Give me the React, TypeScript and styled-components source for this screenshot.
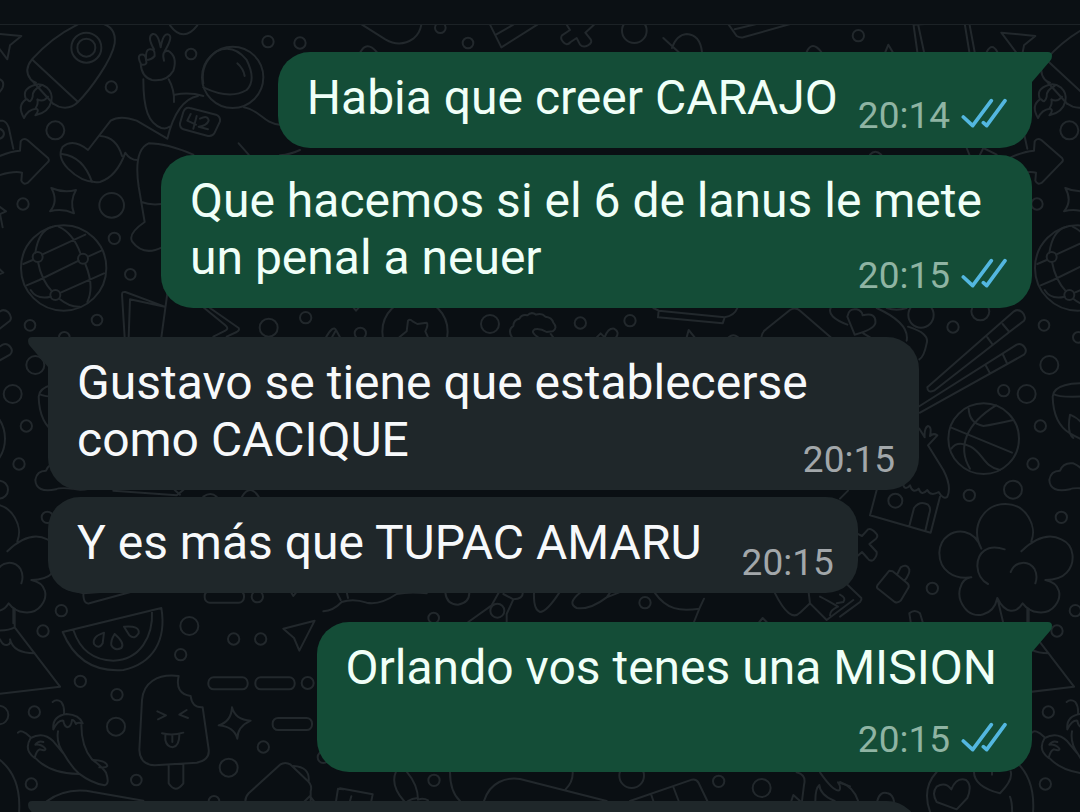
import React from "react";
import styled, { createGlobalStyle } from "styled-components";

const GlobalStyle = createGlobalStyle`
  *, *::before, *::after { box-sizing: border-box; }
  body { margin: 0; background: #0a0f13; font-family: Roboto, sans-serif; }
`;

const Screen = styled.div`
  position: relative;
  display: flex;
  flex-direction: column;
  height: 100vh;
  overflow: hidden;
  background: #0a0f13;
`;

const Header = styled.header`
  position: relative;
  flex: none;
  height: 25px;
  background: #0b1014;
  border-bottom: 1px solid #1c2226;
`;

const Wallpaper = styled.svg`
  position: absolute;
  top: 0;
  left: 0;
  fill: none;
  stroke: #22282c;
  stroke-width: 6;
  stroke-linecap: round;
  stroke-linejoin: round;
`;

const Chat = styled.main`
  position: relative;
  flex: 1;
  min-height: 0;
  overflow: hidden;
  padding: 27px 48px 0;
`;

const Thread = styled.ol`
  display: flex;
  flex-direction: column;
  gap: 29px;
  margin: 0;
  padding: 0;
  list-style: none;
`;

const Turn = styled.li<{ $mine: boolean }>`
  display: flex;
  flex-direction: column;
  align-items: ${(p) => (p.$mine ? "flex-end" : "flex-start")};
  gap: 7px;
`;

const Bubble = styled.article<{ $mine: boolean; $tail: boolean }>`
  position: relative;
  display: flow-root;
  max-width: calc(100% - 113px);
  min-height: 96px;
  padding: 17px 28px ${(p) => (p.$mine ? 10 : 8)}px 29px;
  border-radius: 32px;
  border-top-left-radius: ${(p) => (p.$tail && !p.$mine ? 0 : 32)}px;
  border-top-right-radius: ${(p) => (p.$tail && p.$mine ? 0 : 32)}px;
  background: ${(p) => (p.$mine ? "#144d37" : "#1f272a")};
  color: ${(p) => (p.$mine ? "#f0fff8" : "#f7f9fb")};
  font-size: 48px;
  line-height: 57px;
`;

const Tail = styled.svg<{ $mine: boolean }>`
  position: absolute;
  top: 0;
  ${(p) => (p.$mine ? "left: 100%;" : "right: 100%; transform: scaleX(-1);")}
  fill: ${(p) => (p.$mine ? "#144d37" : "#1f272a")};
`;

const Meta = styled.span<{ $mine: boolean; $below: boolean }>`
  float: right;
  display: flex;
  gap: 11px;
  margin-top: ${(p) => (p.$below ? 22 : p.$mine ? 25 : 27)}px;
  margin-right: ${(p) => (p.$mine ? -3 : -4)}px;
  margin-left: ${(p) => (p.$mine ? 20 : 40)}px;
  color: ${(p) => (p.$mine ? "#8fb4a3" : "#a2a7aa")};
  font-size: 37px;
  line-height: 44px;
`;

const Body = styled.span<{ $block: boolean }>`
  display: ${(p) => (p.$block ? "block" : "inline")};
  padding-right: ${(p) => (p.$block ? 7 : 0)}px;
`;

const Ticks = styled.svg`
  margin-top: 4px;
  fill: none;
  stroke: #53b7e0;
  stroke-width: 11;
  stroke-linecap: round;
  stroke-linejoin: round;
`;

type Message = { text: string; time: string; below?: boolean };
type Group = { mine: boolean; messages: Message[] };

const groups: Group[] = [
  {
    mine: true,
    messages: [
      { text: "Habia que creer CARAJO", time: "20:14" },
      { text: "Que hacemos si el 6 de lanus le mete un penal a neuer", time: "20:15" },
    ],
  },
  {
    mine: false,
    messages: [
      { text: "Gustavo se tiene que establecerse como CACIQUE", time: "20:15" },
      { text: "Y es más que TUPAC AMARU", time: "20:15" },
    ],
  },
  { mine: true, messages: [{ text: "Orlando vos tenes una MISION", time: "20:15", below: true }] },
];

const Incoming = styled(Bubble)`
  width: 100%;
`;

function BubbleTail({ mine }: { mine: boolean }) {
  return (
    <Tail $mine={mine} width="20" height="32" viewBox="0 0 20 32" aria-hidden="true">
      <path d="M-1 0H16Q20 0 20 4Q20 7 18 9L0 30L-1 32Z" />
    </Tail>
  );
}

function MessageBubble({ message, mine, tail }: { message: Message; mine: boolean; tail: boolean }) {
  const below = Boolean(message.below);
  return (
    <Bubble $mine={mine} $tail={tail}>
      {tail && <BubbleTail mine={mine} />}
      <Body $block={below}>{message.text}</Body>
      <Meta $mine={mine} $below={below}>
        <time>{message.time}</time>
        {mine && (
          <Ticks width="46" height="30" viewBox="0 0 138 90" role="img" aria-label="Read">
            <path d="M7 57L35 83L91 8M67 74L77 83L132 8" />
          </Ticks>
        )}
      </Meta>
    </Bubble>
  );
}

/* Every doodle is drawn on a grid three times finer than the page. */
function Doodles() {
  return (
    <Wallpaper width="2000" height="1000" aria-hidden="true">
      <defs>
        <g id="west">
          <g transform="scale(.33333)">
            {/* paper plane and scraps at the seam */}
            <path d="M-38 98L64 108L30 136L22 178ZM0 238Q14 244 8 262Q4 272 -6 280" />
            {/* rocket */}
            <path d="M228 76C180 100 130 140 96 178Q70 210 92 238Q96 244 108 248M228 76Q250 60 300 68Q350 80 344 130C336 180 270 270 234 306Q210 330 176 320L158 310M98 180L234 306M100 246L160 312" />
            <circle cx="259" cy="143" r="45" />
            <circle cx="259" cy="143" r="27" />
            <path d="M72 354Q50 316 78 298Q64 266 106 254Q124 250 140 262Q160 280 154 304Q146 338 106 346Q120 330 108 326Q84 328 72 354M82 298Q92 312 98 290Q96 270 122 258M106 326Q116 310 112 298Q130 308 144 290" />
            <circle cx="334" cy="261" r="17" />
            <circle cx="166" cy="391" r="27" />
            <circle cx="69" cy="612" r="17" />
            {/* camera edge and arrow */}
            <path d="M-20 362H8Q20 366 26 382L40 446M-10 384Q12 388 12 402Q10 416 -10 418M-10 472Q30 454 60 452L62 424Q70 412 82 420L144 474Q150 482 142 488L84 548Q70 556 64 542L66 518Q40 512 -10 528M-30 600L18 634L0 642L8 682M-20 790L10 818L-10 826" />
            <path d="M154 564Q190 580 228 570Q208 604 222 640Q186 624 150 634Q176 604 154 564Z" />
            {/* globe */}
            <circle cx="191" cy="804" r="128" />
            <path d="M70 792L98 780M126 764L256 704M264 770L304 752M236 782L118 840L80 856M182 878L312 820M106 758Q116 690 158 680M114 786Q124 840 156 874M176 680Q220 700 242 762M256 792Q284 860 262 906M178 896Q210 922 240 920M92 870Q110 900 152 890" />
            <circle cx="113" cy="771" r="15" />
            <circle cx="249" cy="776" r="15" />
            <circle cx="166" cy="885" r="15" />
            <circle cx="90" cy="976" r="16" />
            <circle cx="193" cy="1012" r="16" />
          </g>
          <g transform="translate(0 590) scale(.33333)">
            {/* pizza slice */}
            <path d="M44 56V112L180 290L-20 314M-10 122Q26 122 44 112M0 148Q10 170 24 164Q34 160 30 148Q40 190 104 190" />
            <circle cx="184" cy="62" r="17" />
            <circle cx="129" cy="123" r="17" />
            <circle cx="103" cy="366" r="17" />
            <circle cx="-3" cy="375" r="28" />
            <circle cx="94" cy="582" r="17" />
            {/* chillies */}
            <path d="M158 336Q170 326 184 336Q194 350 192 372M160 418Q156 378 200 372Q238 374 248 400Q232 396 228 402Q222 388 216 390Q214 410 202 412Q192 408 190 392Q174 390 160 418M174 424Q168 460 192 492Q214 530 236 550Q276 580 314 586Q330 582 318 548Q306 530 276 508Q244 470 244 404M54 428Q64 416 90 440M104 504Q70 480 92 444Q130 424 160 454L190 490M104 504Q110 480 120 478Q138 484 136 476Q124 462 106 464Q116 450 130 456M108 506Q150 550 236 552M280 510Q320 512 322 528Q318 534 298 532" />
            <path d="M-20 496Q70 550 56 680" />
          </g>
        </g>
        <g id="east">
          <g transform="translate(840 300) scale(.33333)">
            {/* chopsticks */}
            <path d="M262 262L522 34Q534 26 546 36Q560 50 552 62L282 272Q262 280 262 262M442 112L458 134M488 72L508 96M220 330L530 134Q544 128 554 142Q562 154 552 164L240 338M436 194L450 220M488 162L502 192" />
            {/* basketball */}
            <circle cx="431" cy="416" r="106" />
            <path d="M332 382L516 458M468 316C380 370 350 440 390 506M386 326Q388 370 430 378Q460 374 520 360M334 446Q352 420 392 440C430 460 430 500 480 510" />
            <circle cx="628" cy="195" r="27" />
            <circle cx="491" cy="272" r="17" />
            <circle cx="560" cy="282" r="27" />
            <circle cx="601" cy="378" r="17" />
            <circle cx="579" cy="492" r="17" />
            <circle cx="519" cy="569" r="27" />
            <circle cx="388" cy="586" r="17" />
            <circle cx="664" cy="652" r="17" />
            {/* cup */}
            <path d="M780 252Q640 240 638 290Q640 370 690 400Q740 430 780 430M640 282Q660 296 780 286M690 344Q730 360 740 400M690 344Q680 400 700 414" />
            {/* small cloud */}
            <path d="M790 566Q760 572 740 566Q700 562 690 568Q630 580 628 540Q632 512 660 512Q670 486 700 490Q724 500 730 516" />
            {/* popcorn */}
            <path d="M424 746C390 680 430 612 496 612C560 612 592 680 574 724M544 754C600 700 640 706 664 718C706 736 706 790 680 818Q660 840 616 840C664 850 666 890 646 916C620 950 570 940 548 910C530 940 496 944 472 894C460 950 400 960 374 924C344 886 360 836 394 832C340 840 298 810 298 758C300 710 340 690 374 696Q410 704 424 746M494 748C440 730 412 760 412 798Q414 836 444 852M512 816C526 782 566 780 584 808Q594 828 586 850M472 894L490 970M562 924V970" />
          </g>
        </g>
      </defs>
      <use href="#west" />
      <use href="#west" x="1014" />
      <use href="#east" />
      <use href="#east" x="-1014" />

      <g transform="scale(.33333)">
        {/* astronaut */}
        <path d="M510 76Q550 130 592 76M424 194Q410 170 422 164Q436 160 438 178Q436 150 448 148Q466 144 464 168Q454 180 438 180Q444 196 424 194M462 148Q440 110 458 102Q474 98 482 142Q490 96 506 104Q520 110 494 154M492 182Q484 152 504 152Q534 170 520 212Q500 246 456 240Q424 230 422 190M430 238C430 330 446 370 484 384Q500 388 508 380M506 238Q524 270 522 306M524 284Q570 276 610 288M594 288Q530 300 502 416L410 362Q360 344 332 362L264 450Q220 414 188 440Q170 470 204 506Q250 552 300 546Q350 530 376 458Q390 480 412 480M302 408Q350 412 366 468M186 462Q250 470 276 546" />
        <circle cx="698" cy="232" r="92" />
        <path d="M610 250Q600 190 650 154Q700 130 740 180Q770 240 740 270Q690 300 610 262M712 190Q730 206 734 228M732 322C780 330 790 370 840 374M716 430L746 464M580 464Q500 430 446 430Q400 450 416 560L434 666Q384 700 396 724Q430 770 486 742M424 606Q450 616 484 612M840 466Q870 464 900 450" />
        <path d="M570 324Q556 320 550 336L540 370Q538 382 550 388L624 408Q638 410 644 398L660 364Q662 350 648 344Z" />
        <path d="M572 342L562 362L588 374M590 348L580 386M600 356Q624 344 626 362Q620 378 596 380L624 388" />
        <circle cx="573" cy="162" r="16" />
        <circle cx="804" cy="125" r="17" />
        <circle cx="900" cy="129" r="17" />
        <circle cx="335" cy="616" r="37" />
        <circle cx="343" cy="715" r="17" />
        <circle cx="391" cy="823" r="16" />
        <circle cx="291" cy="960" r="16" />
        <circle cx="806" cy="983" r="27" />
        {/* pennant */}
        <path d="M374 1012L366 884Q366 874 376 876L494 920M386 1012L390 898L494 920M502 880L484 1012M630 924L716 984Q720 990 710 996L680 1010M610 922L676 976Q688 986 676 992L640 1010" />
      </g>

      {/* strip under the header */}
      <g transform="translate(240 20) scale(.33333)">
        <path d="M366 14L436 58Q480 84 520 56Q540 40 544 14M750 14L784 82L892 14M768 44L820 14M980 14L990 30L966 46Q960 56 968 64Q980 80 992 66L1010 54L1020 74Q1030 84 1044 76Q1058 68 1052 58L1036 38L1062 14M1270 54L1318 98M1296 84Q1310 44 1340 42Q1380 44 1386 96M1466 14L1490 48Q1500 54 1510 52L1680 4L1740 -10M1484 28L1600 0" />
        <path d="M360 98Q380 60 410 96" />
        <circle cx="601" cy="23" r="16" />
        <circle cx="684" cy="69" r="16" />
        <circle cx="1183" cy="32" r="37" />
      </g>
      <g transform="translate(840 30) scale(.33333)">
        <circle cx="55" cy="17" r="17" />
        <path d="M-100 66Q-84 30 -56 66M136 66L145 44L158 66M220 -20L232 66M234 -18L252 66M220 -16L290 -20M374 -20L388 66M388 -20L404 66M440 66Q456 36 472 66" />
        <path d="M380 354L388 374M420 374L430 354L470 374M90 374Q105 356 124 374" />
      </g>

      {/* strip between the first and second turn */}
      <g transform="translate(160 280) scale(.33333)">
        <circle cx="437" cy="113" r="17" />
        <circle cx="601" cy="160" r="17" />
        <circle cx="765" cy="155" r="98" />
        <circle cx="990" cy="132" r="27" />
        <circle cx="1261" cy="129" r="17" />
        <path d="M580 82L588 92L597 82M498 172Q520 134 528 150L540 172M516 172L526 154M718 172L740 154L744 122Q750 116 758 124L772 132L800 128Q806 134 796 154L804 172" />
        <path d="M1056 172Q1042 150 1060 138Q1060 120 1078 116Q1086 102 1102 106Q1114 94 1128 104Q1146 98 1156 110Q1176 112 1180 128Q1194 144 1178 154L1160 156Q1140 144 1124 148Q1110 156 1134 172M1172 162L1180 172M1310 172L1322 160L1334 172Q1344 144 1362 146Q1380 156 1368 172" />
      </g>
      <g transform="translate(560 280) scale(.33333)">
        <circle cx="210" cy="122" r="17" />
        <circle cx="1083" cy="105" r="38" />
        <circle cx="1261" cy="94" r="27" />
        <circle cx="1179" cy="141" r="17" />
        <path d="M280 84L296 92L294 112L488 130L494 112L296 92M494 112Q524 106 532 84M380 172L386 150L404 172M506 172Q520 160 534 172M604 172Q606 156 618 148L690 90Q706 80 720 92L812 172M812 84Q800 110 862 134M884 164L862 110Q866 84 890 88Q906 92 908 106Q950 96 946 130Q940 150 884 164M910 160L930 172M950 84Q1050 130 1040 182M1044 140Q1110 160 1100 190Q1092 230 1078 238M980 84Q1010 94 1040 84" />
      </g>

      {/* gap between the two incoming bubbles */}
      <g transform="translate(0 300) scale(.33333)">
        <path d="M340 572L530 586L550 570M524 570L540 584M610 590Q632 574 650 590M726 590Q750 550 776 590" />
      </g>

      {/* house, bone, padlock */}
      <g transform="translate(840 300) scale(.33333)">
        <path d="M110 570L90 646L272 698L300 590M208 678L222 624Q240 600 264 614Q274 624 268 640L256 692M190 556Q196 572 210 556Q218 582 236 566Q244 590 262 570Q272 590 296 576Q310 600 322 590Q336 560 310 510L264 436L292 406Q280 398 270 408Q276 380 264 378Q252 384 254 412L238 386M0 596L24 572" />
        <circle cx="166" cy="602" r="21" />
        <path d="M50 700L66 708L84 688Q94 684 108 700Q116 708 108 716L88 732L110 756Q112 768 100 780Q90 786 82 774L66 756L50 770M148 812L112 856Q108 864 116 868L164 906Q174 910 182 902L206 862Q208 854 200 848L158 814ZM172 822L182 802Q200 790 208 808Q210 820 194 842M20 852L64 894Q66 900 60 906L0 950M0 884Q20 894 10 906L-10 910M208 940Q224 926 240 940L248 966M212 966L208 940" />
        <circle cx="277" cy="865" r="17" />
      </g>
      <g transform="translate(840 600) scale(.33333)">
        <path d="M290 516Q240 570 276 650M350 628L290 606Q274 580 290 560Q316 544 334 568Q350 530 378 540Q398 556 382 594ZM402 516Q402 560 480 580Q520 540 512 514M456 516V524M510 590Q518 610 516 650M0 546Q40 560 54 602M112 602Q120 572 144 580Q158 584 162 604" />
      </g>

      {/* watermelon, ice cream and dashes */}
      <g transform="translate(0 590) scale(.33333)">
        <path d="M188 126L484 54C500 150 460 220 370 240Q240 250 188 126M220 120Q250 210 340 212C420 210 460 140 456 62M312 128L308 160Q296 180 282 162Q276 140 312 128M344 132Q376 160 364 174Q344 184 334 166Q332 150 344 132M372 110Q420 106 416 130Q404 150 388 136ZM200 -4L250 10Q250 44 268 40L400 4M250 10L300 6" />
        <circle cx="241" cy="274" r="17" />
        <circle cx="351" cy="314" r="17" />
        <circle cx="348" cy="410" r="27" />
        <circle cx="568" cy="108" r="27" />
        <circle cx="542" cy="194" r="17" />
        <circle cx="701" cy="147" r="17" />
        <circle cx="782" cy="147" r="17" />
        <circle cx="772" cy="20" r="17" />
        <circle cx="923" cy="279" r="18" />
        <circle cx="790" cy="471" r="17" />
        <circle cx="686" cy="533" r="27" />
        <circle cx="409" cy="570" r="16" />
        <circle cx="970" cy="502" r="17" />
        <circle cx="642" cy="634" r="16" />
        <rect x="614" y="2" width="118" height="36" rx="16" />
        <rect x="625" y="262" width="118" height="36" rx="16" />
        <rect x="766" y="262" width="118" height="36" rx="16" />
        <rect x="818" y="384" width="118" height="36" rx="16" />
        <path d="M850 116L944 92L898 182L882 144ZM874 8L880 18L888 8M696 352Q706 390 752 392Q712 410 712 446Q702 410 656 406Q694 394 696 352" />
        <path d="M536 258C470 250 430 280 426 330L418 480Q420 524 464 526L590 518Q630 510 626 478L608 352Q576 354 572 318Q524 310 536 258M506 526V580Q526 612 550 580V522" />
        <path d="M472 364L498 376L474 388M560 360L538 374L564 384M486 430Q516 438 550 428M496 434V450Q500 470 518 472Q538 468 538 434M517 436V456" />
        <path d="M140 634Q200 590 280 606L430 632M736 634Q736 620 746 610L840 524Q856 514 872 524L920 570Q938 584 932 604V632M880 528Q930 530 926 574M914 634L930 618L942 634M1008 634L1014 596L1030 598" />
      </g>

      {/* strip above the last outgoing bubble */}
      <g transform="translate(300 590) scale(.33333)">
        <path d="M70 64Q100 62 125 36Q160 24 200 38Q240 46 290 12Q330 4 380 10M110 6L122 30M140 6L144 24M436 8Q440 44 474 44Q508 38 508 8M505 96L575 46L596 8M610 12L640 28Q670 26 668 8M640 28L620 72V96M702 8Q700 60 720 66Q740 66 778 8M840 8Q800 40 830 54Q870 60 920 22L956 8M920 22L930 8M1064 8C1100 60 1140 64 1198 56L1212 26M1198 56L1182 96M1424 8Q1470 100 1500 68L1530 40L1526 8M1378 96L1388 84L1400 96M1530 40L1580 90L1660 30M1590 76Q1590 60 1614 50Q1580 30 1560 20" />
        <circle cx="401" cy="84" r="16" />
        <circle cx="592" cy="62" r="21" />
        <circle cx="1035" cy="38" r="17" />
      </g>

      {/* strip under the last outgoing bubble */}
      <g transform="translate(340 765) scale(.33333)">
        <path d="M0 70L98 88L94 108M34 94L30 108M168 20Q150 60 192 108M200 20Q234 60 234 104Q250 98 264 106M204 108Q220 98 234 100M330 20Q330 80 360 108M432 108C450 50 500 36 540 42L800 108M698 20Q700 50 676 74M870 108L1056 44Q1070 42 1076 54L1102 108M934 90L940 108M1000 66L1016 108M1370 22Q1400 30 1392 60L1386 108M1354 108L1360 90L1380 108M1426 108Q1426 70 1438 60Q1440 90 1484 108M1440 22Q1480 80 1498 76Q1504 66 1494 52Q1520 60 1530 64" />
        <circle cx="282" cy="46" r="17" />
        <circle cx="875" cy="32" r="37" />
        <circle cx="1136" cy="49" r="17" />
        <circle cx="1265" cy="69" r="27" />
      </g>
    </Wallpaper>
  );
}

export default function App() {
  return (
    <Screen>
      <GlobalStyle />
      <Doodles />
      <Header />
      <Chat>
        <Thread>
          {groups.map((group, g) => (
            <Turn key={g} $mine={group.mine}>
              {group.messages.map((message, m) => (
                <MessageBubble key={m} message={message} mine={group.mine} tail={m === 0} />
              ))}
            </Turn>
          ))}
          <Turn $mine={false}>
            <Incoming $mine={false} $tail>
              <BubbleTail mine={false} />
            </Incoming>
          </Turn>
        </Thread>
      </Chat>
    </Screen>
  );
}
